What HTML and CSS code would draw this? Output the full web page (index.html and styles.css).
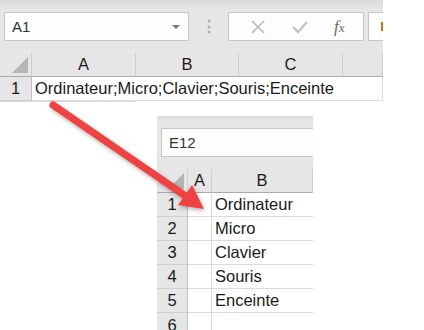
FILE: index.html
```html
<!DOCTYPE html>
<html lang="fr">
<head>
    <meta charset="UTF-8">
    <title>Excel - texte vers colonnes</title>
    <link rel="stylesheet" href="styles.css">
</head>
<body>
    <div class="page">
        <div class="sheet sheet-top">
            <div class="toolbar">
                <div class="name-box">
                    <span>A1</span>
                    <span class="caret"></span>
                </div>
                <div class="grip">⋮</div>
                <div class="formula-box">
                    <svg class="tool-icon" width="16" height="16" viewBox="0 0 16 16">
                        <path d="M2 2 L14 14 M14 2 L2 14" stroke="#b8b8b8" stroke-width="1.6" fill="none"/>
                    </svg>
                    <svg class="tool-icon" width="18" height="16" viewBox="0 0 18 16">
                        <path d="M2 8 L7 13 L16 3" stroke="#c4c4c4" stroke-width="2.4" fill="none"/>
                    </svg>
                    <span class="fx"><i>f</i><i class="x">x</i></span>
                </div>
                <div class="extra-box"><span class="orange"></span></div>
            </div>
            <div class="grid grid-top">
                <div class="corner"><span class="tri"></span></div>
                <div class="col-head">A</div>
                <div class="col-head">B</div>
                <div class="col-head">C</div>
                <div class="col-head"></div>
                <div class="row-head">1</div>
                <div class="cell wide">Ordinateur;Micro;Clavier;Souris;Enceinte</div>
                <div class="cell"></div>
                <div class="cell"></div>
                <div class="cell"></div>
            </div>
        </div>

        <div class="sheet sheet-bottom">
            <div class="toolbar small">
                <div class="name-box open">
                    <span>E12</span>
                </div>
            </div>
            <div class="grid grid-bottom">
                <div class="corner"><span class="tri"></span></div>
                <div class="col-head">A</div>
                <div class="col-head">B</div>

                <div class="row-head">1</div><div class="cell"></div><div class="cell">Ordinateur</div>
                <div class="row-head">2</div><div class="cell"></div><div class="cell">Micro</div>
                <div class="row-head">3</div><div class="cell"></div><div class="cell">Clavier</div>
                <div class="row-head">4</div><div class="cell"></div><div class="cell">Souris</div>
                <div class="row-head">5</div><div class="cell"></div><div class="cell">Enceinte</div>
                <div class="row-head last">6</div><div class="cell"></div><div class="cell"></div>
            </div>
        </div>

        <svg class="arrow" width="424" height="330" viewBox="0 0 424 330">
            <line x1="53" y1="105" x2="187" y2="197" stroke="#ef4343" stroke-width="7" stroke-linecap="round"/>
            <polygon points="204,209 178,205 192,185" fill="#ef4343"/>
        </svg>
    </div>
</body>
</html>
```

FILE: styles.css
```css
body {
    margin: 0;
    background-color: white;
    font-family: "Liberation Sans", Arial, sans-serif;
    color: #1a1a1a;
}
.page {
    position: relative;
    width: 424px;
    height: 330px;
    overflow: hidden;
}
.sheet {
    background-color: white;
}
.sheet-top {
    width: 383px;
}
.sheet-bottom {
    width: 156px;
    margin-left: 157px;
    margin-top: 14px;
}
.toolbar {
    display: flex;
    align-items: center;
    height: 53px;
    padding-left: 4px;
    box-sizing: border-box;
    background: linear-gradient(#dadada, #e6e6e6 9px, #e6e6e6);
}
.toolbar.small {
    background: linear-gradient(#dcdcdc, #e6e6e6 6px, #e6e6e6);
}
.name-box {
    display: flex;
    align-items: center;
    justify-content: space-between;
    width: 185px;
    height: 29px;
    box-sizing: border-box;
    padding: 0 8px 0 7px;
    background-color: #fdfdfd;
    border: 1px solid #c6c6c6;
    font-size: 15px;
    color: #333;
}
.name-box.open {
    flex: 1;
    border-right: none;
}
.caret {
    width: 0;
    height: 0;
    border-left: 4px solid transparent;
    border-right: 4px solid transparent;
    border-top: 4px solid #777;
}
.grip {
    width: 39px;
    text-align: center;
    color: #a8a8a8;
    font-size: 16px;
    font-weight: bold;
}
.formula-box {
    display: flex;
    align-items: center;
    justify-content: space-around;
    width: 136px;
    height: 29px;
    box-sizing: border-box;
    background-color: #fdfdfd;
    border: 1px solid #c6c6c6;
    padding: 0 6px 0 8px;
}
.fx {
    font-family: "Liberation Serif", serif;
    font-size: 17px;
    color: #6a6a6a;
}
.fx .x {
    font-size: 13px;
}
.extra-box {
    flex: 1;
    height: 29px;
    margin-left: 4px;
    box-sizing: border-box;
    background-color: #fdfdfd;
    border: 1px solid #c6c6c6;
    border-right: none;
    display: flex;
    align-items: center;
    justify-content: flex-end;
}
.orange {
    width: 2px;
    height: 9px;
    background-color: #c8731e;
}
.grid {
    display: grid;
    font-size: 16.5px;
}
.grid-top {
    grid-template-columns: 32px 104px 103px 104px 40px;
    grid-template-rows: 24px 24px;
}
.grid-bottom {
    grid-template-columns: 31px 24px 101px;
    grid-auto-rows: 24px;
}
.corner {
    position: relative;
    background-color: #e6e6e6;
    border-right: 1px solid #cfcfcf;
    border-bottom: 1px solid #ababab;
}
.tri {
    position: absolute;
    right: 3px;
    bottom: 3px;
    width: 0;
    height: 0;
    border-left: 16px solid transparent;
    border-bottom: 16px solid #b5b5b5;
}
.col-head {
    display: flex;
    align-items: center;
    justify-content: center;
    background-color: #e6e6e6;
    border-right: 1px solid #cfcfcf;
    border-bottom: 1px solid #ababab;
}
.row-head {
    display: flex;
    align-items: center;
    justify-content: center;
    background-color: #e6e6e6;
    border-right: 1px solid #bdbdbd;
    border-bottom: 1px solid #cfcfcf;
}
.row-head.last {
    align-items: flex-start;
    padding-top: 3px;
}
.cell {
    display: flex;
    align-items: center;
    padding-left: 3px;
    border-right: 1px solid #dadada;
    border-bottom: 1px solid #dadada;
    white-space: nowrap;
    overflow: visible;
}
.cell.wide {
    grid-column: span 3;
    border-right: none;
}
.grid-bottom .cell:nth-child(3n) {
    border-right: none;
}
.arrow {
    position: absolute;
    left: 0;
    top: 0;
    filter: drop-shadow(1px 2px 2px rgba(0,0,0,0.3));
}
```
